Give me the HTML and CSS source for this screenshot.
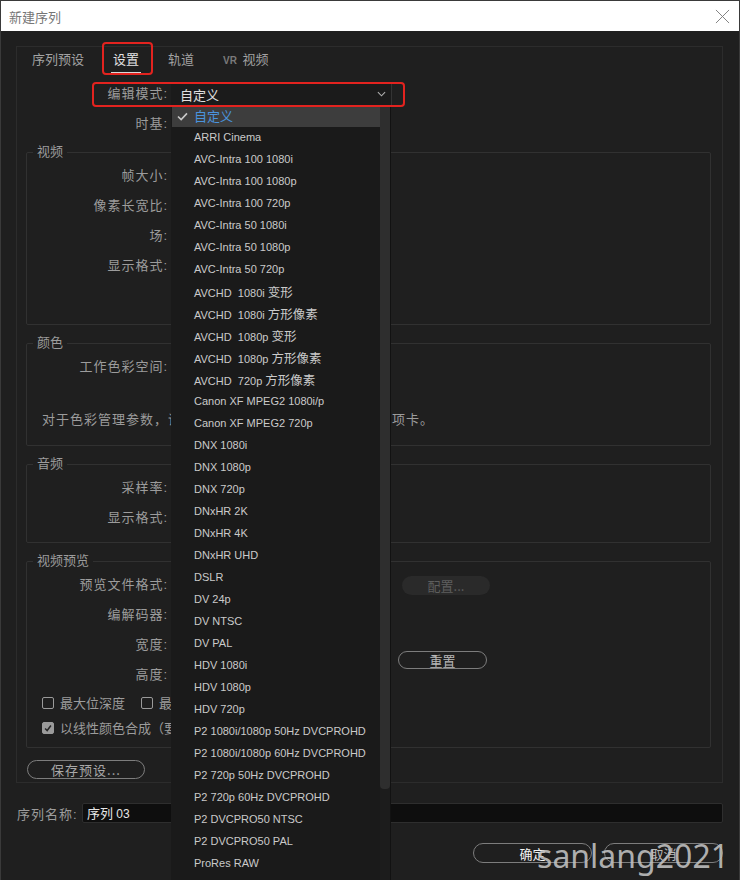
FILE: index.html
```html
<!DOCTYPE html>
<html lang="zh-CN">
<head>
  <meta charset="UTF-8">
  <title>新建序列</title>
  <link rel="stylesheet" href="styles.css">
</head>
<body>
<div class="window">
  <div class="titlebar">
    <span class="title">新建序列</span>
    <svg class="close" viewBox="0 0 16 16"><path d="M1 1L15 15M15 1L1 15"/></svg>
  </div>

  <div class="content">
    <div class="panel">
      <div class="tabs">
        <span class="tab">序列预设</span>
        <span class="tab active marked">设置</span>
        <span class="tab">轨道</span>
        <span class="tab"><b class="vr">VR</b> 视频</span>
      </div>

      <div class="row mode-row">
        <span class="label">编辑模式:</span>
        <div class="select">
          <span class="select-value">自定义</span>
          <svg class="chevron" viewBox="0 0 10 6"><path d="M1 1L5 5L9 1"/></svg>

          <!-- 展开的下拉列表 -->
          <div class="dropdown">
            <ul>
              <li class="selected"><svg class="check" viewBox="0 0 12 10"><path d="M1 5L4.5 8.5L11 1.5"/></svg><span class="cjk">自定义</span></li>
              <li>ARRI Cinema</li>
              <li>AVC-Intra 100 1080i</li>
              <li>AVC-Intra 100 1080p</li>
              <li>AVC-Intra 100 720p</li>
              <li>AVC-Intra 50 1080i</li>
              <li>AVC-Intra 50 1080p</li>
              <li>AVC-Intra 50 720p</li>
              <li>AVCHD&nbsp; 1080i <span class="cjk">变形</span></li>
              <li>AVCHD&nbsp; 1080i <span class="cjk">方形像素</span></li>
              <li>AVCHD&nbsp; 1080p <span class="cjk">变形</span></li>
              <li>AVCHD&nbsp; 1080p <span class="cjk">方形像素</span></li>
              <li>AVCHD&nbsp; 720p <span class="cjk">方形像素</span></li>
              <li>Canon XF MPEG2 1080i/p</li>
              <li>Canon XF MPEG2 720p</li>
              <li>DNX 1080i</li>
              <li>DNX 1080p</li>
              <li>DNX 720p</li>
              <li>DNxHR 2K</li>
              <li>DNxHR 4K</li>
              <li>DNxHR UHD</li>
              <li>DSLR</li>
              <li>DV 24p</li>
              <li>DV NTSC</li>
              <li>DV PAL</li>
              <li>HDV 1080i</li>
              <li>HDV 1080p</li>
              <li>HDV 720p</li>
              <li>P2 1080i/1080p 50Hz DVCPROHD</li>
              <li>P2 1080i/1080p 60Hz DVCPROHD</li>
              <li>P2 720p 50Hz DVCPROHD</li>
              <li>P2 720p 60Hz DVCPROHD</li>
              <li>P2 DVCPRO50 NTSC</li>
              <li>P2 DVCPRO50 PAL</li>
              <li>ProRes RAW</li>
            </ul>
            <div class="scrollbar"><div class="thumb"></div></div>
          </div>
        </div>
      </div>

      <div class="row base-row">
        <span class="label">时基:</span>
      </div>

      <fieldset class="group group-video">
        <legend>视频</legend>
        <div class="line"><span class="label">帧大小:</span></div>
        <div class="line"><span class="label">像素长宽比:</span></div>
        <div class="line"><span class="label">场:</span></div>
        <div class="line"><span class="label">显示格式:</span></div>
      </fieldset>

      <fieldset class="group group-color">
        <legend>颜色</legend>
        <div class="line"><span class="label">工作色彩空间:</span></div>
        <p class="note">对于色彩管理参数，请参阅“首选项”之中的“常规”选项卡。</p>
      </fieldset>

      <fieldset class="group group-audio">
        <legend>音频</legend>
        <div class="line"><span class="label">采样率:</span></div>
        <div class="line"><span class="label">显示格式:</span></div>
      </fieldset>

      <fieldset class="group group-preview">
        <legend>视频预览</legend>
        <div class="line">
          <span class="label">预览文件格式:</span>
          <span class="value"></span>
          <button class="btn btn-disabled">配置...</button>
        </div>
        <div class="line"><span class="label">编解码器:</span></div>
        <div class="size-block">
          <div>
            <div class="line"><span class="label">宽度:</span><span class="value"></span></div>
            <div class="line"><span class="label">高度:</span><span class="value"></span></div>
          </div>
          <button class="btn btn-reset">重置</button>
        </div>
        <div class="checks">
          <label class="checkbox"><span class="box"></span>最大位深度</label>
          <label class="checkbox"><span class="box"></span>最高渲染质量</label>
        </div>
        <div class="checks">
          <label class="checkbox"><span class="box checked"><svg viewBox="0 0 12 12"><path d="M2.5 6.5L5 9L9.5 3"/></svg></span>以线性颜色合成（要求 GPU 加速或最高渲染品质）</label>
        </div>
      </fieldset>

      <button class="btn btn-save">保存预设...</button>
    </div>

    <div class="name-row">
      <span class="name-label">序列名称:</span>
      <div class="name-input"><span class="cjk-w">序列</span> 03</div>
    </div>

    <div class="actions">
      <button class="btn btn-ok">确定</button>
      <button class="btn btn-cancel">取消</button>
    </div>
  </div>

  <div class="watermark">sanlang2021</div>
</div>
</body>
</html>
```

FILE: styles.css
```css
* {
  box-sizing: border-box;
}

body {
  margin: 0;
  background-color: #1f1f1f;
  font-family: "Liberation Sans", "Noto Sans CJK SC", sans-serif;
  color: #9c9c9c;
  overflow: hidden;
}

.window {
  position: relative;
  width: 740px;
  height: 880px;
  border: 1px solid #3a3a3a;
  border-bottom: none;
  overflow: hidden;
}

.titlebar {
  height: 30px;
  background-color: #fff;
  display: flex;
  justify-content: space-between;
  align-items: center;
  padding: 0 9px 0 8px;
}

.title {
  font-family: "Noto Sans CJK SC", sans-serif;
  font-size: 13px;
  color: #767676;
}

.close {
  width: 15px;
  height: 15px;
  fill: none;
  stroke: #7c7c7c;
  stroke-width: 1;
}

.content {
  padding: 15px 16px 0 15px;
}

.panel {
  height: 737px;
  border: 1px solid #2c2c2c;
}

/* 标签页 */
.tabs {
  display: flex;
  gap: 29px;
  padding-left: 15px;
}

.tab {
  position: relative;
  font-size: 13px;
  line-height: 18px;
  padding: 4px 0 2px;
  border-bottom: 2px solid transparent;
  color: #a2a2a2;
}

.tab.active {
  color: #e2e2e2;
  border-bottom-color: #d8d8d8;
  padding-left: 2px;
  padding-right: 2px;
  margin: 0 -2px;
}

.tab .vr {
  font-size: 10px;
  color: #7a7a7a;
  margin-right: 2px;
}

.marked::after {
  content: "";
  position: absolute;
  left: -9px;
  right: -12px;
  top: -5px;
  bottom: -3px;
  border: 2px solid #e3231f;
  border-radius: 4px;
}

/* 表单行 */
.row {
  position: relative;
  display: flex;
  align-items: center;
  gap: 3px;
  height: 22px;
}

.label {
  flex: none;
  text-align: right;
  font-size: 13px;
  line-height: 18px;
  letter-spacing: 1px;
  white-space: nowrap;
}

.row .label {
  width: 151px;
}

.mode-row {
  margin-top: 9px;
  z-index: 10;
}

.mode-row::after {
  content: "";
  position: absolute;
  left: 75px;
  right: 317px;
  top: -1px;
  bottom: -2px;
  border: 2px solid #e3231f;
  border-radius: 4px;
  pointer-events: none;
}

.base-row {
  margin-top: 8px;
}

.select {
  position: relative;
  width: 221px;
  height: 22px;
  display: flex;
  align-items: center;
  justify-content: space-between;
  padding: 0 5px 0 9px;
  background-color: #1b1b1b;
  border-right: 1px solid #343434;
}

.select-value {
  font-family: "Noto Sans CJK SC", sans-serif;
  font-size: 13px;
  color: #e0e0e0;
}

.chevron {
  width: 9px;
  height: 6px;
  fill: none;
  stroke: #b0b0b0;
  stroke-width: 1.2;
}

.dropdown {
  position: absolute;
  left: 0;
  top: 22px;
  width: 220px;
  height: 800px;
  background-color: #1a1a1a;
  overflow: hidden;
}

.dropdown ul {
  list-style: none;
  margin: 0;
  padding: 0 11px 0 1px;
}

.dropdown li {
  height: 22px;
  line-height: 21px;
  padding-left: 22px;
  font-size: 11px;
  color: #cacaca;
  white-space: nowrap;
}

.dropdown .cjk {
  font-family: "Noto Sans CJK SC", sans-serif;
  font-size: 12.5px;
}

.dropdown li.selected {
  position: relative;
  background-color: #3d3d3d;
  color: #4a93dd;
}

.dropdown li.selected .cjk {
  font-size: 13px;
}

.check {
  position: absolute;
  left: 5px;
  top: 7px;
  width: 11px;
  height: 9px;
  fill: none;
  stroke: #c8c8c8;
  stroke-width: 1.8;
}

.scrollbar {
  position: absolute;
  top: 0;
  right: 0;
  bottom: 0;
  width: 11px;
  background-color: #1c1c1c;
  border-right: 1px solid #121212;
}

.thumb {
  height: 684px;
  background-color: #2e2e2e;
  border-radius: 0 0 4px 4px;
}

/* 分组框 */
.group {
  margin: 8px 11px 0 9px;
  padding: 0;
  border: 1px solid #313131;
  border-radius: 2px;
  min-width: 0;
}

.group legend {
  margin-left: 6px;
  padding: 0 4px;
  font-size: 13px;
  line-height: 18px;
}

.group-video {
  padding-bottom: 43px;
}

.group-color {
  margin-top: 9px;
  padding-bottom: 11px;
}

.group-audio {
  margin-top: 9px;
  padding-bottom: 9px;
}

.group-preview {
  margin-top: 9px;
  padding-bottom: 7px;
}

.line {
  display: flex;
  align-items: center;
  gap: 3px;
  height: 30px;
}

.line .label {
  width: 141px;
}

.value {
  width: 228px;
}

.size-block {
  display: flex;
  align-items: center;
}

.size-block .value {
  width: 227px;
}

.note {
  margin: 22px 0 0;
  padding-left: 15px;
  height: 30px;
  line-height: 30px;
  font-family: "Noto Sans CJK SC", sans-serif;
  font-size: 13px;
  letter-spacing: 1px;
  white-space: nowrap;
  overflow: hidden;
}

.checks {
  display: flex;
  align-items: center;
  gap: 16px;
  height: 25px;
  padding-left: 15px;
  white-space: nowrap;
  overflow: hidden;
}

.checkbox {
  display: flex;
  align-items: center;
  gap: 6px;
  font-size: 13px;
}

.box {
  width: 12px;
  height: 12px;
  border: 1.5px solid #9a9a9a;
  border-radius: 2px;
}

.box.checked {
  background-color: #9a9a9a;
  display: flex;
}

.box svg {
  width: 100%;
  height: 100%;
  fill: none;
  stroke: #262626;
  stroke-width: 1.8;
}

/* 按钮 */
.btn {
  font-family: "Noto Sans CJK SC", sans-serif;
  font-size: 13px;
  line-height: 15px;
  height: 19px;
  padding: 0;
  border: 1.5px solid #7d7d7d;
  border-radius: 10px;
  background-color: transparent;
  color: #b8b8b8;
}

.btn-disabled {
  width: 88px;
  border: none;
  background-color: #2a2a2a;
  color: #5e5e5e;
}

.btn-reset {
  width: 89px;
  height: 18px;
}

.btn-save {
  width: 118px;
  margin: 12px 0 0 10px;
  color: #a8a8a8;
  letter-spacing: 1px;
}

/* 序列名称 */
.name-row {
  display: flex;
  align-items: center;
  gap: 5px;
  margin-top: 20px;
  padding-left: 1px;
}

.name-label {
  font-size: 13px;
  letter-spacing: 1px;
  width: 60px;
  white-space: nowrap;
}

.name-input {
  flex: 1;
  height: 20px;
  line-height: 18px;
  padding-left: 4px;
  background-color: #0e0e0e;
  border: 1px solid #2e2e2e;
  border-radius: 2px;
  font-size: 12px;
  color: #e6e6e6;
}

.cjk-w {
  font-family: "Noto Sans CJK SC", sans-serif;
  font-size: 13px;
}

.actions {
  display: flex;
  justify-content: flex-end;
  gap: 12px;
  margin-top: 20px;
}

.btn-ok,
.btn-cancel {
  width: 119px;
  height: 20px;
}

.btn-ok {
  color: #f2f2f2;
}

.watermark {
  position: absolute;
  right: 10px;
  top: 834px;
  font-family: "Noto Sans", sans-serif;
  font-size: 32px;
  line-height: 42px;
  color: rgba(195, 195, 195, 0.88);
  pointer-events: none;
}
```
